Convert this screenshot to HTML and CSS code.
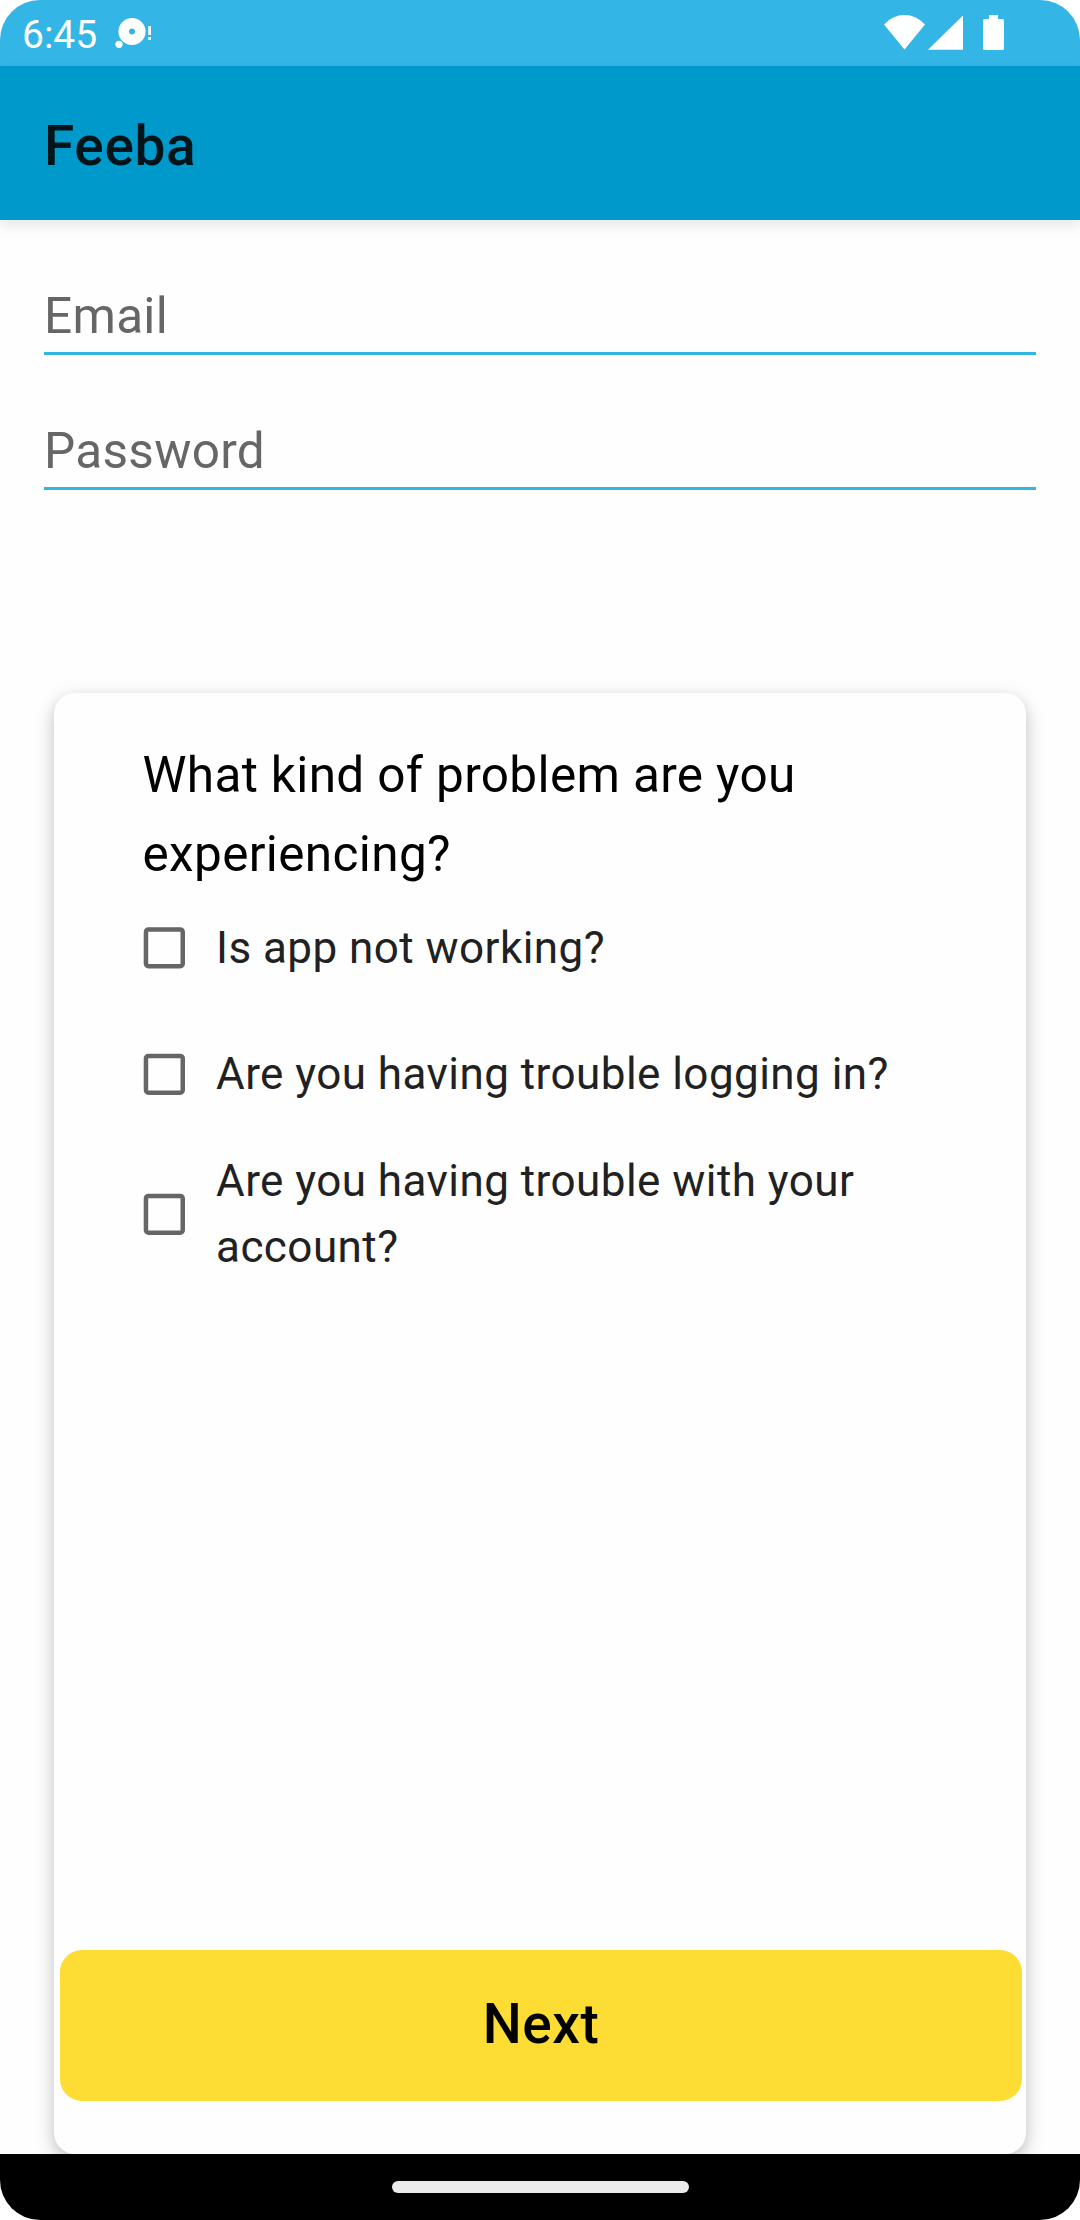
FILE: index.html
```
<!DOCTYPE html>
<html lang="en">
<head>
<meta charset="utf-8">
<title>Feeba</title>
<link rel="stylesheet" href="styles.css">
</head>
<body>
<div class="screen">
  <header class="status-bar">
    <span class="clock">6:45</span>
    <svg class="notice-icon" width="38" height="32" viewBox="0 0 38 32" fill="#fff">
      <path fill-rule="evenodd" d="M17 .9a13.6 13.6 0 1 1 0 27.2a13.6 13.6 0 1 1 0-27.2zM17 11.5a3 3 0 1 0 0 6a3 3 0 1 0 0-6z"/>
      <circle cx="4" cy="27.3" r="3.6"/>
      <rect x="33.3" y="9" width="2.7" height="9"/>
      <rect x="33.3" y="20" width="2.7" height="3"/>
    </svg>
    <svg class="system-icons" width="122" height="36" viewBox="0 0 122 36" fill="#fff">
      <path d="M1 9.5Q9.500 0 21.500 0T42 9.500L21.500 34.500z"/>
      <path d="M45 34.800L80 .5V34.800z"/>
      <path d="M106 0h9v4h4.500q1.500 0 1.500 1.500v28q0 1.500-1.500 1.500h-18q-1.500 0-1.500-1.500v-28q0-1.500 1.500-1.500h4.500z"/>
    </svg>
  </header>
  <div class="app-bar"><h1 class="app-title">Feeba</h1></div>
  <main class="content">
    <form class="login">
      <div class="field">Email</div>
      <div class="field">Password</div>
    </form>
    <section class="survey">
      <h2 class="question">What kind of problem are you experiencing?</h2>
      <ul class="options">
        <li class="option">
          <svg class="checkbox" width="42" height="42" viewBox="0 0 42 42"><rect x="2.950" y="2.400" width="36.800" height="36.800" rx="2.500"/></svg>
          <span class="label">Is app not working?</span>
        </li>
        <li class="option">
          <svg class="checkbox" width="42" height="42" viewBox="0 0 42 42"><rect x="2.950" y="2.900" width="36.800" height="36.800" rx="2.500"/></svg>
          <span class="label">Are you having trouble logging in?</span>
        </li>
        <li class="option">
          <svg class="checkbox" width="42" height="42" viewBox="0 0 42 42"><rect x="2.950" y="2.900" width="36.800" height="36.800" rx="2.500"/></svg>
          <span class="label">Are you having trouble with your account?</span>
        </li>
      </ul>
      <button class="next" type="button">Next</button>
    </section>
  </main>
  <footer class="nav-bar"><span class="handle"></span></footer>
</div>
</body>
</html>
```
FILE: styles.css
```
* { box-sizing: border-box; }
body { margin: 0; background: #fff; font-family: Roboto, sans-serif; }
.screen {
  display: flex;
  flex-direction: column;
  width: 1080px;
  height: 2220px;
  overflow: hidden;
  border-radius: 40px;
  background: #fefefe;
}
.status-bar {
  display: flex;
  align-items: flex-start;
  height: 66px;
  padding: 0 75px 0 22px;
  background: #33b5e5;
}
.clock { width: 93px; padding-top: 2px; font-size: 39px; line-height: 66px; color: #fff; }
.notice-icon { margin-top: 17px; }
.system-icons { margin: 15px 0 0 auto; }
.app-bar {
  height: 154px;
  padding: 6px 44px 0;
  background: #0099cc;
  box-shadow: 0 6px 12px rgba(0, 0, 0, .09);
}
.app-title {
  margin: 0;
  font-size: 55px;
  font-weight: 500;
  line-height: 148px;
  letter-spacing: .600px;
  color: #001419;
}
.content { display: flex; flex-direction: column; flex: 1; overflow: hidden; }
.login { padding: 0 44px; }
.field {
  height: 135px;
  padding: 66px 0 6px;
  border-bottom: 3px solid #33b5e5;
  font-size: 49.500px;
  line-height: 60px;
  letter-spacing: .300px;
  color: #666;
}
.survey {
  display: flex;
  flex-direction: column;
  height: 1461px;
  margin: 203px 54px 0;
  padding: 43px 4px 53px 6px;
  border-radius: 21px;
  background: #fefefe;
  box-shadow: 0 6px 18px rgba(0, 0, 0, .26);
}
.question {
  margin: 0 84px 0 82.500px;
  font-size: 49.500px;
  font-weight: 400;
  line-height: 79px;
  letter-spacing: .350px;
  color: #000;
}
.options { margin: -9px 84px 0 83px; padding: 0; list-style: none; }
.option { display: flex; align-items: center; min-height: 126px; padding: 11px 0; }
.checkbox { flex: none; margin-right: 31px; fill: none; stroke: #666; stroke-width: 4.500px; }
.label { font-size: 44px; line-height: 66px; letter-spacing: .450px; color: #212121; }
.next {
  height: 151px;
  margin-top: auto;
  padding: 0 0 2px;
  border: 0;
  border-radius: 22px;
  background: #fddd34;
  font: 500 55px/149px Roboto, sans-serif;
  letter-spacing: .500px;
  color: #000;
}
.nav-bar {
  display: flex;
  justify-content: center;
  height: 66px;
  padding-top: 27px;
  background: #000;
}
.handle { width: 297px; height: 12px; border-radius: 6px; background: #ebebeb; }
```
